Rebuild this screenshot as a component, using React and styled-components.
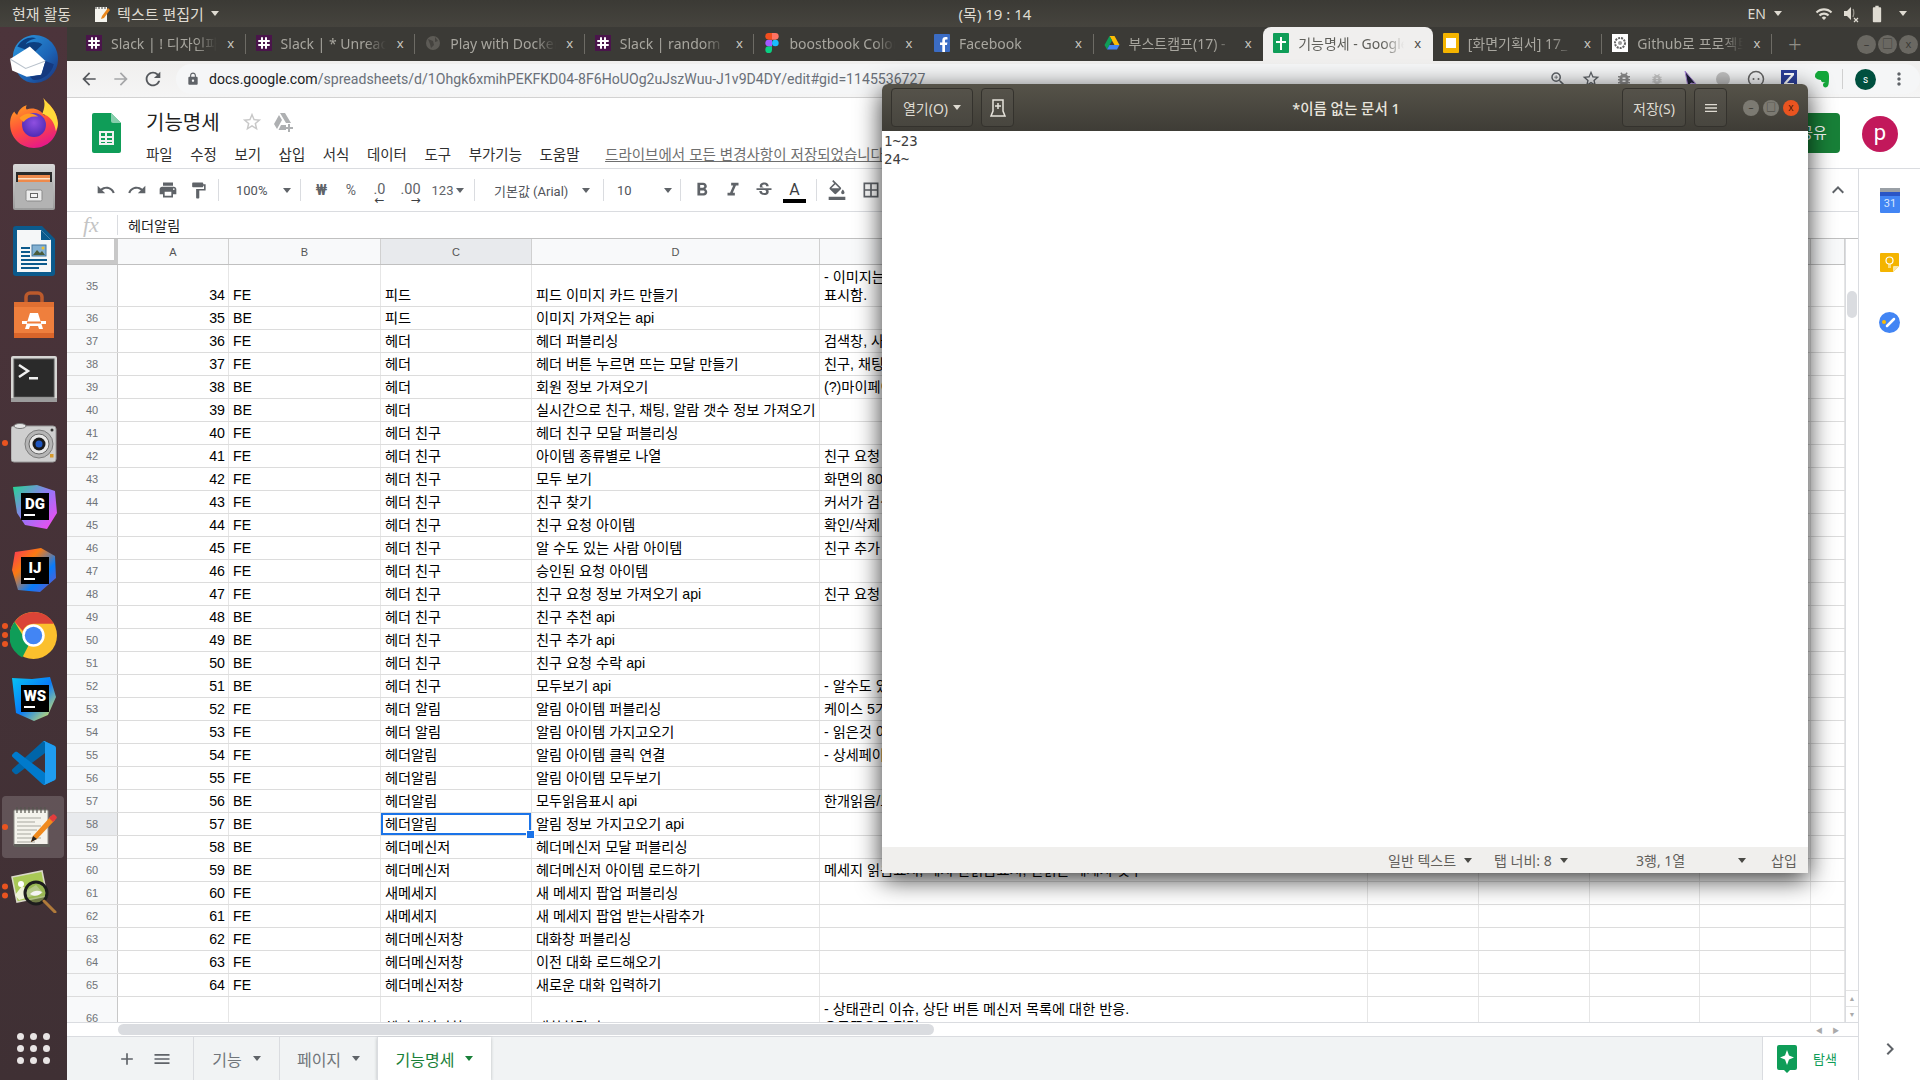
import React from 'react';
import styled, { createGlobalStyle } from 'styled-components';
import {
  MdArrowBack,
  MdArrowForward,
  MdRefresh,
  MdLock,
  MdUndo,
  MdRedo,
  MdPrint,
  MdFormatPaint,
  MdFormatBold,
  MdFormatItalic,
  MdStrikethroughS,
  MdFormatColorFill,
  MdBorderAll,
  MdKeyboardArrowUp,
  MdKeyboardArrowRight,
  MdStarBorder,
  MdAdd,
  MdMenu,
  MdWifi,
  MdBatteryStd,
  MdZoomIn,
  MdBugReport,
  MdMoreVert,
} from 'react-icons/md';

const SHEET_FONT = '"Liberation Sans", "Noto Sans CJK KR", sans-serif';
const UI_FONT = '"Noto Sans", "Noto Sans CJK KR", sans-serif';

const GlobalStyle = createGlobalStyle`
  html, body {
    margin: 0;
    padding: 0;
    width: 1920px;
    height: 1080px;
    overflow: hidden;
    background: #3c3b37;
  }
  * { box-sizing: border-box; }
`;

const Screen = styled.div`
  position: relative;
  width: 1920px;
  height: 1080px;
  display: flex;
  flex-direction: column;
  overflow: hidden;
  font-family: ${UI_FONT};
`;

/* gnome top bar */
const TopBar = styled.header`
  height: 27px;
  flex: none;
  display: grid;
  grid-template-columns: 1fr auto 1fr;
  align-items: center;
  background: linear-gradient(#3b3a35, #46443e);
  color: #dfdbd2;
  font-size: 15px;
`;

const TopLeft = styled.div`
  display: flex;
  align-items: center;
  padding-left: 12px;
`;

const AppName = styled.span`
  display: flex;
  align-items: center;
  gap: 7px;
  margin-left: 24px;
`;

const TopRight = styled.div`
  display: flex;
  align-items: center;
  justify-content: flex-end;
  padding-right: 13px;
  font-size: 14px;
`;

const TrayIcon = styled.span`
  display: flex;
  margin-left: ${({ $ml = 0 }) => $ml}px;
  svg { display: block; }
`;

const Caret = styled.span`
  display: inline-block;
  width: 0;
  height: 0;
  margin-left: ${({ $ml = 0 }) => $ml}px;
  border-left: ${({ $s = 4 }) => $s}px solid transparent;
  border-right: ${({ $s = 4 }) => $s}px solid transparent;
  border-top: ${({ $s = 4 }) => $s + 1}px solid ${({ $c = '#5f6368' }) => $c};
  flex: none;
`;

const Clock = styled.span`
  font-size: 15px;
  padding-left: 70px;
`;

const Desktop = styled.div`
  flex: 1;
  display: flex;
  min-height: 0;
`;

/* dock */
const Dock = styled.nav`
  width: 67px;
  flex: none;
  display: flex;
  flex-direction: column;
  align-items: center;
  background: linear-gradient(#4c343b, #3f3034);
`;

const DockItem = styled.div`
  height: 64px;
  width: 100%;
  flex: none;
  display: flex;
  align-items: center;
  justify-content: center;
  position: relative;
  &::before {
    content: '';
    display: ${({ $active }) => ($active ? 'block' : 'none')};
    position: absolute;
    left: 2px;
    right: 3px;
    top: 1px;
    bottom: 1px;
    border-radius: 4px;
    background: rgba(255, 255, 255, 0.17);
  }
  svg { display: block; position: relative; }
`;

const RunDots = styled.div`
  position: absolute;
  left: 2px;
  top: 50%;
  transform: translateY(-50%);
  display: flex;
  flex-direction: column;
  gap: 3px;
`;

const RunDot = styled.span`
  width: 6px;
  height: 6px;
  border-radius: 50%;
  background: #e95420;
`;

const LauncherGrid = styled.div`
  margin-top: auto;
  margin-bottom: 16px;
  display: grid;
  grid-template-columns: repeat(3, 7px);
  gap: 5px 6px;
`;

const LauncherDot = styled.span`
  width: 7px;
  height: 7px;
  border-radius: 50%;
  background: #e8e4e4;
`;

/* chrome */
const Browser = styled.main`
  flex: 1;
  min-width: 0;
  display: flex;
  flex-direction: column;
  background: #fff;
`;

const TabStrip = styled.div`
  height: 34px;
  flex: none;
  display: flex;
  align-items: flex-end;
  padding-left: 9px;
  background: #3b3a36;
`;

const Tab = styled.div`
  width: 169.6px;
  height: 34px;
  flex: none;
  display: flex;
  align-items: center;
  padding: 0 10px 2px 10px;
  gap: 9px;
  font-size: 14px;
  color: ${({ $active }) => ($active ? '#5f5f5a' : '#a8a69f')};
  background: ${({ $active }) => ($active ? '#f0efee' : 'transparent')};
  border-radius: 8px 8px 0 0;
  position: relative;
  &::after {
    content: '';
    display: ${({ $sep }) => ($sep ? 'block' : 'none')};
    position: absolute;
    right: 0;
    top: 7px;
    bottom: 7px;
    width: 1px;
    background: #6d6b65;
  }
  svg { flex: none; display: block; }
`;

const TabTitle = styled.span`
  flex: 1;
  min-width: 0;
  overflow: hidden;
  white-space: nowrap;
  mask-image: linear-gradient(to right, #000 80%, transparent 100%);
`;

const TabClose = styled.span`
  flex: none;
  width: 10px;
  font-size: 13px;
  text-align: center;
  color: ${({ $active }) => ($active ? '#4a4a46' : '#c9c7c0')};
`;

const NewTab = styled.span`
  margin-left: 16px;
  align-self: center;
  font-size: 24px;
  line-height: 1;
  font-weight: 300;
  color: #8f8d86;
`;

const WinButtons = styled.div`
  margin-left: auto;
  align-self: center;
  display: flex;
  gap: 2px;
  padding-right: 2px;
`;

const GhostWinButton = styled.span`
  width: 19px;
  height: 19px;
  border-radius: 50%;
  background: #6a6862;
  color: #3b3a36;
  font-size: 11px;
  line-height: 18px;
  text-align: center;
`;

const AddressBar = styled.div`
  height: 37px;
  flex: none;
  display: flex;
  align-items: center;
  background: linear-gradient(#f0efee, #f5f5f5);
  border-bottom: 1px solid #d2d2d2;
  padding-left: 6px;
  svg { display: block; flex: none; }
`;

const NavButton = styled.span`
  width: 32px;
  display: flex;
  justify-content: center;
  color: ${({ $off }) => ($off ? '#a5a6a8' : '#55585c')};
`;

const UrlPill = styled.div`
  flex: 1;
  height: 30px;
  margin-left: 7px;
  border-radius: 15px;
  background: #f5f6f7;
  display: flex;
  align-items: center;
  padding-left: 10px;
  gap: 9px;
  font-family: "Roboto", sans-serif;
  font-size: 14.1px;
  color: #6a7079;
  white-space: nowrap;
`;

const UrlHost = styled.span`
  color: #202124;
`;

const ExtIcons = styled.div`
  margin-left: auto;
  display: flex;
  align-items: center;
  height: 100%;
  padding-right: 11px;
`;

const ExtIcon = styled.span`
  width: ${({ $w = 33 }) => $w}px;
  display: flex;
  justify-content: center;
  color: ${({ $c = '#5f6368' }) => $c};
`;

const ExtSep = styled.span`
  width: 1px;
  height: 20px;
  background: #d0d0d0;
  margin: 0 4px;
`;

const ProfileDot = styled.span`
  width: 21px;
  height: 21px;
  margin: 0 13px 0 8px;
  border-radius: 50%;
  background: #00503f;
  color: #fff;
  font-size: 10px;
  line-height: 21px;
  text-align: center;
`;

/* google sheets */
const SheetHeader = styled.div`
  height: 71px;
  flex: none;
  display: flex;
  align-items: center;
  padding: 0 22px 0 25px;
  border-bottom: 1px solid #dadce0;
  font-family: ${SHEET_FONT};
`;

const DocMeta = styled.div`
  margin-left: 25px;
  display: flex;
  flex-direction: column;
  gap: 7px;
  padding-top: 5px;
`;

const DocTitleRow = styled.div`
  display: flex;
  align-items: center;
  gap: 11px;
  height: 28px;
  color: #c8c8c8;
`;

const DocTitle = styled.span`
  font-size: 20px;
  color: #1f1f1f;
  margin-right: 10px;
`;

const MenuRow = styled.div`
  display: flex;
  align-items: center;
  gap: 17.5px;
  font-size: 14.5px;
  color: #303030;
  white-space: nowrap;
`;

const SaveNote = styled.span`
  color: #6f6f6f;
  text-decoration: underline;
  margin-left: 8px;
`;

const ShareButton = styled.span`
  margin-left: auto;
  width: 80px;
  height: 40px;
  padding-left: 26px;
  border-radius: 4px;
  background: #188038;
  color: #fff;
  font-size: 15px;
  line-height: 40px;
  text-align: center;
`;

const Avatar = styled.span`
  width: 36px;
  height: 36px;
  margin: 1px 0 0 22px;
  border-radius: 50%;
  background: #c2185b;
  color: #fff;
  font-family: "Roboto", sans-serif;
  font-size: 22px;
  line-height: 33px;
  text-align: center;
`;

const SheetArea = styled.div`
  flex: 1;
  min-height: 0;
  display: flex;
`;

const SheetMain = styled.div`
  flex: 1;
  min-width: 0;
  display: flex;
  flex-direction: column;
  font-family: ${SHEET_FONT};
`;

const Toolbar = styled.div`
  height: 43px;
  flex: none;
  display: flex;
  align-items: center;
  padding-left: 23px;
  border-bottom: 1px solid #dadce0;
  font-family: "Roboto", "Noto Sans CJK KR", sans-serif;
  font-size: 13px;
  color: #51545a;
`;

const ToolButton = styled.span`
  width: ${({ $w = 31 }) => $w}px;
  height: 30px;
  flex: none;
  display: flex;
  align-items: center;
  justify-content: center;
  gap: 3px;
  margin-left: ${({ $ml = 0 }) => $ml}px;
  font-weight: ${({ $bold }) => ($bold ? 700 : 400)};
  font-size: ${({ $fs = 13 }) => $fs}px;
  color: ${({ $c = '#5f6368' }) => $c};
  svg { display: block; }
`;

const ToolSep = styled.span`
  width: 1px;
  height: 22px;
  flex: none;
  background: #dadce0;
  margin: 0 ${({ $m = 5 }) => $m}px;
`;

const ToolSelect = styled.span`
  width: ${({ $w }) => $w}px;
  flex: none;
  display: flex;
  align-items: center;
  justify-content: space-between;
  padding: 0 ${({ $pr = 8 }) => $pr}px 0 ${({ $pl = 13 }) => $pl}px;
  color: #51545a;
  white-space: nowrap;
`;

const DecimalGlyph = styled.span`
  display: flex;
  flex-direction: column;
  align-items: ${({ $end }) => ($end ? 'flex-end' : 'center')};
  line-height: 15px;
  font-size: 14.5px;
  padding-top: 5px;
`;

const DecimalArrow = styled.span`
  font-size: 12px;
  line-height: 6px;
  color: #3c4043;
  font-family: "DejaVu Sans", sans-serif;
`;

const ColorA = styled.span`
  display: flex;
  flex-direction: column;
  align-items: center;
  font-size: 16px;
  line-height: 19px;
  color: #3c4043;
  padding-top: 2px;
`;

const ColorBar = styled.span`
  width: 23px;
  height: 4px;
  background: #000;
`;

const CollapseButton = styled.span`
  margin-left: auto;
  margin-right: 5px;
  width: 30px;
  display: flex;
  justify-content: center;
  color: #5f6368;
`;

const FormulaBar = styled.div`
  height: 27px;
  flex: none;
  display: flex;
  align-items: center;
  padding-bottom: 1px;
  border-bottom: 1px solid #c0c0c0;
  font-size: 14.2px;
  color: #1f1f1f;
`;

const FxMark = styled.span`
  width: 50px;
  padding-left: 16px;
  font-family: "Liberation Serif", serif;
  font-style: italic;
  font-size: 22px;
  color: #c4c4c4;
`;

const FormulaSep = styled.span`
  width: 1px;
  height: 20px;
  background: #dadce0;
  margin-right: 10px;
`;

const GridFrame = styled.div`
  flex: 1;
  min-height: 0;
  display: flex;
`;

const GridClip = styled.div`
  flex: 1;
  min-width: 0;
  overflow: hidden;
`;

const columns = '51px 111px 152px 151px 288px 548px 111px 111px 110px 111px 34px';

const HeadRow = styled.div`
  display: grid;
  grid-template-columns: ${columns};
  height: 26px;
  border-bottom: 1px solid #c0c0c0;
  background: #f8f9fa;
`;

const CornerCell = styled.div`
  background: #fff;
  border-right: 4px solid #c8c8c8;
  box-shadow: inset 0 -4px 0 #c8c8c8;
`;

const HeadCell = styled.div`
  display: flex;
  align-items: center;
  justify-content: center;
  font-size: 11px;
  color: #555;
  border-right: 1px solid #d0d0d0;
  background: ${({ $on }) => ($on ? '#e8eaed' : 'transparent')};
`;

const Row = styled.div`
  display: grid;
  grid-template-columns: ${columns};
  height: ${({ $tall }) => ($tall ? 42 : 23)}px;
  border-bottom: 1px solid #dcdcdc;
`;

const RowNumber = styled.div`
  display: flex;
  align-items: center;
  justify-content: center;
  font-size: 11px;
  color: #6f7378;
  border-right: 1px solid #c8c8c8;
  background: ${({ $on }) => ($on ? '#e8eaed' : '#f8f9fa')};
`;

const Cell = styled.div`
  position: relative;
  display: flex;
  align-items: flex-end;
  justify-content: ${({ $num }) => ($num ? 'flex-end' : 'flex-start')};
  padding: 0 3px 2px 4px;
  font-size: 14.2px;
  line-height: 18px;
  color: #000;
  border-right: 1px solid #e6e6e6;
  white-space: pre;
  overflow: ${({ $on }) => ($on ? 'visible' : 'hidden')};
  ${({ $on }) =>
    $on &&
    `
    box-shadow: inset 0 0 0 2px #1a73e8;
    &::after {
      content: '';
      position: absolute;
      right: -4px;
      bottom: -4px;
      width: 7px;
      height: 7px;
      background: #1a73e8;
      border: 1px solid #fff;
      z-index: 2;
    }
  `}
`;

const VScroll = styled.div`
  width: 13px;
  flex: none;
  display: flex;
  flex-direction: column;
  border-left: 1px solid #dadce0;
`;

const VThumb = styled.div`
  width: 10px;
  height: 27px;
  margin: 52px 0 0 1px;
  border-radius: 5px;
  background: #dadce0;
`;

const ScrollStep = styled.div`
  height: 16px;
  display: flex;
  align-items: center;
  justify-content: center;
  border-top: 1px solid #e3e3e3;
  color: #aaa;
  font-size: 7px;
  margin-top: ${({ $push }) => ($push ? 'auto' : 0)};
`;

const HScroll = styled.div`
  height: 14px;
  flex: none;
  display: flex;
  align-items: center;
  padding-left: 51px;
  background: #fff;
  border-top: 1px solid #dadce0;
`;

const HThumb = styled.div`
  width: 816px;
  height: 11px;
  border-radius: 6px;
  background: #dadce0;
`;

const HSteps = styled.div`
  margin-left: auto;
  width: 47px;
  display: flex;
  justify-content: space-around;
  padding-right: 14px;
  color: #aaa;
  font-size: 7px;
`;

const SheetTabsBar = styled.div`
  height: 44px;
  flex: none;
  display: flex;
  align-items: stretch;
  padding-left: 40px;
  background: #f1f3f4;
  border-top: 1px solid #dadce0;
  font-family: "Liberation Sans", "Noto Sans CJK KR", sans-serif;
  font-size: 16px;
  color: #70757a;
`;

const TabsTool = styled.span`
  width: ${({ $w }) => $w}px;
  margin-right: ${({ $mr = 0 }) => $mr}px;
  display: flex;
  align-items: center;
  justify-content: center;
  color: #5f6368;
`;

const SheetTab = styled.span`
  width: ${({ $w }) => $w}px;
  display: flex;
  align-items: center;
  justify-content: center;
  gap: 11px;
  border-left: 1px solid #dadce0;
  color: ${({ $active }) => ($active ? '#188038' : '#70757a')};
  background: ${({ $active }) => ($active ? '#fff' : 'transparent')};
  box-shadow: ${({ $active }) => ($active ? '0 1px 3px rgba(60,64,67,.3)' : 'none')};
`;

const ExploreButton = styled.span`
  margin-left: auto;
  width: 96px;
  display: flex;
  align-items: center;
  gap: 16px;
  padding-left: 14px;
  background: #fff;
  border-left: 1px solid #dadce0;
  color: #0f9d58;
  font-size: 13px;
`;

const SidePanel = styled.aside`
  width: 62px;
  flex: none;
  display: flex;
  flex-direction: column;
  align-items: center;
  padding-top: 19px;
  gap: 40px;
  border-left: 1px solid #dadce0;
  background: #fff;
  svg { display: block; }
`;

const PanelArrow = styled.span`
  margin-top: auto;
  margin-bottom: 19px;
  color: #5f6368;
`;

/* gedit window */
const EditorWindow = styled.section`
  position: absolute;
  left: 882px;
  top: 84px;
  width: 926px;
  height: 789px;
  display: flex;
  flex-direction: column;
  border-radius: 6px 6px 0 0;
  background: #fff;
  box-shadow: 0 6px 26px rgba(0, 0, 0, 0.8);
  z-index: 5;
`;

const EditorHeader = styled.div`
  height: 47px;
  flex: none;
  display: flex;
  align-items: center;
  position: relative;
  padding: 0 9px;
  border-radius: 6px 6px 0 0;
  background: linear-gradient(#565349, #3e3c36);
  color: #dfdbd2;
  font-size: 14px;
`;

const EditorButton = styled.span`
  height: 39px;
  width: ${({ $w }) => $w}px;
  flex: none;
  display: flex;
  align-items: center;
  justify-content: center;
  gap: 5px;
  margin-left: ${({ $ml = 0 }) => $ml}px;
  border: 1px solid #34322d;
  border-radius: 4px;
  background: linear-gradient(#55524a, #48463f);
  color: #dfdbd2;
  svg { display: block; }
`;

const EditorTitle = styled.span`
  position: absolute;
  left: 0;
  right: 0;
  text-align: center;
  padding-left: 2px;
  font-size: 14.5px;
  font-weight: 500;
  color: #e8e5dd;
  pointer-events: none;
`;

const WindowControls = styled.div`
  margin-left: 16px;
  display: flex;
  gap: 4px;
`;

const WindowControl = styled.span`
  width: 16px;
  height: 16px;
  border-radius: 50%;
  font-size: 10px;
  line-height: 15px;
  text-align: center;
  color: ${({ $close }) => ($close ? '#4a1a08' : '#3f3d37')};
  background: ${({ $close }) => ($close ? '#e95420' : '#7c7a72')};
`;

const EditorBody = styled.pre`
  flex: 1;
  margin: 0;
  padding: 1px 2px;
  font-family: "DejaVu Sans Mono", "Noto Sans CJK KR", monospace;
  font-size: 14px;
  line-height: 18px;
  color: #3d3d3d;
`;

const EditorStatus = styled.div`
  height: 26px;
  flex: none;
  display: flex;
  align-items: center;
  padding-left: 506px;
  background: #f0efed;
  font-size: 14px;
  color: #62605b;
  white-space: nowrap;
`;

const StatusItem = styled.span`
  display: flex;
  align-items: center;
  justify-content: ${({ $spread }) => ($spread ? 'space-between' : 'flex-start')};
  gap: 8px;
  width: ${({ $w }) => $w}px;
  padding-right: ${({ $spread }) => ($spread ? 25 : 0)}px;
  flex: none;
`;

/* icons */
const SlackIcon = () => (
  <svg width="16" height="16" viewBox="0 0 16 16">
    <rect width="16" height="16" fill="#4a154b" />
    <g stroke="#fff" strokeWidth="2" strokeLinecap="round">
      <path d="M6 3v10M10 3v10M3 6h10M3 10h10" />
    </g>
  </svg>
);

const GlobeIcon = () => (
  <svg width="16" height="16" viewBox="0 0 16 16">
    <circle cx="8" cy="8" r="7" fill="#5d5b56" />
    <path d="M3 4l5 2 1 4-3 3-1-4zM10 2l3 4-3 1z" fill="#45433f" />
  </svg>
);

const FigmaIcon = () => (
  <svg width="16" height="20" viewBox="0 0 12 18">
    <circle cx="9" cy="9" r="3" fill="#1abcfe" />
    <path d="M3 18a3 3 0 0 0 3-3v-3H3a3 3 0 0 0 0 6z" fill="#0acf83" />
    <path d="M0 9a3 3 0 0 1 3-3h3v6H3a3 3 0 0 1-3-3z" fill="#a259ff" />
    <path d="M0 3a3 3 0 0 1 3-3h3v6H3a3 3 0 0 1-3-3z" fill="#f24e1e" />
    <path d="M6 0h3a3 3 0 0 1 0 6H6z" fill="#ff7262" />
  </svg>
);

const FacebookIcon = () => (
  <svg width="16" height="18" viewBox="0 0 16 18">
    <rect width="16" height="18" rx="1" fill="#3b6cc4" />
    <path d="M11 18v-7h2l.4-2.6H11V6.8c0-.8.3-1.3 1.4-1.3h1.1V3.2C13 3.100 12.300 3 11.500 3 9.500 3 8.300 4.200 8.300 6.300v2.100H6V11h2.300v7z" fill="#fff" />
  </svg>
);

const DriveIcon = () => (
  <svg width="16" height="16" viewBox="0 0 16 16">
    <path d="M5.500 1h5l5 9h-5z" fill="#fbbc04" />
    <path d="M5.500 1L0.500 10l2.500 4.500 5-9z" fill="#0f9d58" />
    <path d="M3 14.500h10l2.500-4.500h-10z" fill="#4285f4" />
  </svg>
);

const SheetsTabIcon = () => (
  <svg width="16" height="20" viewBox="0 0 16 20">
    <rect width="16" height="20" rx="1" fill="#0f9d58" />
    <path d="M7 4h2v4h4v2H9v7H7v-7H3V8h4z" fill="#fff" />
  </svg>
);

const SlidesIcon = () => (
  <svg width="16" height="20" viewBox="0 0 16 20">
    <rect width="16" height="20" rx="1" fill="#f4b400" />
    <rect x="3" y="5" width="10" height="10" fill="#fff" />
  </svg>
);

const GithubIcon = () => (
  <svg width="16" height="18" viewBox="0 0 16 18">
    <rect width="16" height="18" fill="#fff" />
    <circle cx="8" cy="9" r="5" fill="none" stroke="#666" strokeWidth="2" strokeDasharray="2 1" />
    <circle cx="8" cy="9" r="2" fill="#999" />
  </svg>
);

const ThunderbirdIcon = () => (
  <svg width="50" height="50" viewBox="0 0 48 48">
    <defs>
      <linearGradient id="tb" x1="0" y1="0" x2="1" y2="1">
        <stop offset="0" stopColor="#2d9be0" />
        <stop offset="0.6" stopColor="#1c63b5" />
        <stop offset="1" stopColor="#1b2f75" />
      </linearGradient>
    </defs>
    <path d="M4 26C2 14 10 2 24 1c14 0 23 11 23 23 0 13-10 23-23 23C14 47 7 40 4 26z" fill="url(#tb)" />
    <path d="M8 12c4-7 12-10 18-8-4 1-9 3-10 6 4-3 12-3 16 0l-8 8z" fill="#0d3f80" />
    <path d="M1 24l19-12 15 14-4 13-14 2-14-6z" fill="#fff" />
    <path d="M1 24l15 9 19-7" fill="none" stroke="#b9c2cc" strokeWidth="1" />
    <path d="M20 41l11-2 4-13 8 3c-2 9-11 16-20 15z" fill="#15397f" />
  </svg>
);

const FirefoxIcon = () => (
  <svg width="50" height="52" viewBox="0 0 48 50">
    <defs>
      <linearGradient id="ff" x1="0.2" y1="0" x2="0.6" y2="1">
        <stop offset="0" stopColor="#ffb01f" />
        <stop offset="0.55" stopColor="#ff4f3a" />
        <stop offset="1" stopColor="#e5178a" />
      </linearGradient>
      <radialGradient id="ffc" cx="0.5" cy="0.4" r="0.6">
        <stop offset="0" stopColor="#8f4fe0" />
        <stop offset="1" stopColor="#4e2bb5" />
      </radialGradient>
    </defs>
    <path d="M33 1c3 5 13 10 14 24 0 14-10 24-23 24S1 39 1 26c0-6 2-10 4-12 1 2 2 3 3 3 1-4 5-8 9-9-1 2-1 3 0 4 5-2 13-1 17 6 2-6 1-12-1-17z" fill="url(#ff)" />
    <path d="M33 1c3 5 13 10 14 24 0 3-1 6-2 8-1-9-6-15-13-17 2-5 3-10 1-15z" fill="#ffd93a" />
    <circle cx="24" cy="27" r="11.500" fill="url(#ffc)" />
    <path d="M10 20c6-6 14-5 18-1-6-1-11 1-14 5-1-1-3-2-4-4z" fill="#ff9a24" />
  </svg>
);

const FilesIcon = () => (
  <svg width="42" height="46" viewBox="0 0 42 46">
    <defs>
      <linearGradient id="cab" x1="0" y1="0" x2="0" y2="1">
        <stop offset="0" stopColor="#d8d8d8" />
        <stop offset="1" stopColor="#9a9a9a" />
      </linearGradient>
    </defs>
    <rect x="0" y="0" width="42" height="46" rx="2" fill="url(#cab)" />
    <rect x="3" y="8" width="36" height="12" fill="#2a2a2a" />
    <rect x="5" y="11" width="32" height="8" fill="#ee8a4c" />
    <rect x="5" y="14" width="32" height="1.500" fill="#ffe2c7" />
    <rect x="2" y="18" width="38" height="26" fill="#b3b3b3" />
    <rect x="13" y="26" width="16" height="11" rx="1.500" fill="#ececec" stroke="#8a8a8a" />
    <rect x="17" y="29" width="8" height="5" fill="#666" />
    <rect x="18" y="30" width="6" height="3" fill="#f4f4f4" />
  </svg>
);

const WriterIcon = () => (
  <svg width="42" height="50" viewBox="0 0 42 50">
    <path d="M3 0h26l13 13v34a3 3 0 0 1-3 3H3a3 3 0 0 1-3-3V3a3 3 0 0 1 3-3z" fill="#0b5a8c" />
    <path d="M4 4h24l10 10v32H4z" fill="#f5f7f8" />
    <path d="M28 4l10 10H28z" fill="#0b5a8c" />
    <g fill="#0b5a8c">
      <rect x="8" y="21" width="9" height="2" />
      <rect x="8" y="25" width="9" height="2" />
      <rect x="8" y="29" width="9" height="2" />
      <rect x="8" y="33" width="26" height="2" />
      <rect x="8" y="37" width="26" height="2" />
      <rect x="8" y="41" width="18" height="2" />
    </g>
    <rect x="19" y="19" width="14" height="11" fill="#83b1d2" stroke="#43779d" />
    <path d="M20 29l4-5 3 3 2-2 3 4z" fill="#4a5b3a" />
    <circle cx="30" cy="22" r="1.500" fill="#f0c02d" />
  </svg>
);

const BagIcon = () => (
  <svg width="44" height="48" viewBox="0 0 44 48">
    <path d="M14 12V6a4 4 0 0 1 4-4h8a4 4 0 0 1 4 4v6" fill="none" stroke="#bb5a2c" strokeWidth="3.500" />
    <path d="M2 11h40v36H2z" fill="#ef7f3d" />
    <path d="M2 42h40v5H2z" fill="#d9652a" />
    <path d="M2 11h40v5H2z" fill="#df6f32" />
    <path d="M18 22h8l5 16h-4l-1-3h-8l-1 3h-4z" fill="#fff" />
    <rect x="10" y="30" width="24" height="3" fill="#fff" />
    <rect x="15" y="30.500" width="14" height="2" fill="#ef7f3d" />
  </svg>
);

const TerminalIcon = () => (
  <svg width="46" height="46" viewBox="0 0 46 46">
    <rect width="46" height="46" rx="2" fill="#d6d6d4" />
    <rect x="3" y="3" width="40" height="38" fill="#2a2a2a" stroke="#555" />
    <path d="M8 9l9 6-9 6" fill="none" stroke="#f1f1f1" strokeWidth="2.500" />
    <rect x="18" y="21" width="9" height="2.500" fill="#f1f1f1" />
    <rect y="42" width="46" height="4" fill="#9c9c9c" />
  </svg>
);

const CameraIcon = () => (
  <svg width="46" height="40" viewBox="0 0 46 40">
    <rect y="3" width="45" height="36" rx="3" fill="#cfcfcf" stroke="#9a9a9a" />
    <ellipse cx="9" cy="3" rx="6" ry="2.500" fill="#e4e4e4" stroke="#777" />
    <circle cx="28" cy="21" r="14" fill="#b5b5b5" stroke="#7d7d7d" />
    <circle cx="28" cy="21" r="10" fill="#e8e8e8" stroke="#666" />
    <circle cx="28" cy="21" r="6.500" fill="#1a1a1a" />
    <circle cx="28" cy="21" r="3.500" fill="#1d55c0" />
    <rect x="39" y="31" width="3.500" height="3.500" fill="#d79a2c" />
    <circle cx="41" cy="7" r="1.500" fill="#333" />
  </svg>
);

const IdeIcon = ({ label, shape, id, stops }) => (
  <svg width="46" height="46" viewBox="0 0 46 46">
    <defs>
      <linearGradient id={id} x1="0" y1="0" x2="1" y2="1">
        {stops.map((stop, index) => (
          <stop key={stop} offset={index / (stops.length - 1)} stopColor={stop} />
        ))}
      </linearGradient>
    </defs>
    <path d={shape} fill={`url(#${id})`} />
    <rect x="10" y="9" width="28" height="27" fill="#000" />
    <rect x="13" y="30" width="11" height="2" fill="#fff" />
    <text x="24" y="25" textAnchor="middle" fontFamily="Roboto, sans-serif" fontWeight="900" fontSize="15" fill="#fff">
      {label}
    </text>
  </svg>
);

const ChromeIcon = () => (
  <svg width="47" height="47" viewBox="0 0 46 46">
    <circle cx="23" cy="23" r="23" fill="#fbc02d" />
    <path d="M23 0a23 23 0 0 1 20 11.500H23a11.500 11.500 0 0 0-10.500 7L4.500 9.500A23 23 0 0 1 23 0z" fill="#db4437" />
    <path d="M4.500 9.500L12.500 23 18 33 12 44.500A23 23 0 0 1 4.500 9.500z" fill="#0f9d58" />
    <circle cx="23" cy="23" r="11" fill="#fff" />
    <circle cx="23" cy="23" r="8.500" fill="#4285f4" />
  </svg>
);

const VSCodeIcon = () => (
  <svg width="44" height="44" viewBox="0 0 100 100">
    <path d="M96.4614 10.7962L75.8569 0.875542C73.4719 -0.272773 70.6217 0.211611 68.75 2.08333L1.29858 63.5832C-0.515693 65.2373 -0.513607 68.0937 1.30308 69.7452L6.81272 74.754C8.29793 76.1042 10.5347 76.2036 12.1338 74.9905L93.3609 13.3699C96.086 11.3026 100 13.2462 100 16.6667V16.4275C100 14.0265 98.6246 11.8378 96.4614 10.7962Z" fill="#0065a9" />
    <path d="M96.4614 89.2038L75.8569 99.1245C73.4719 100.273 70.6217 99.7884 68.75 97.9167L1.29858 36.4169C-0.515693 34.7627 -0.513607 31.9063 1.30308 30.2548L6.81272 25.246C8.29793 23.8958 10.5347 23.7964 12.1338 25.0095L93.3609 86.6301C96.086 88.6974 100 86.7538 100 83.3334V83.5726C100 85.9735 98.6246 88.1622 96.4614 89.2038Z" fill="#007acc" />
    <path d="M75.8578 99.1263C73.4721 100.274 70.6219 99.7885 68.75 97.9166C71.0564 100.223 75 98.5895 75 95.3278V4.67213C75 1.41039 71.0564 -0.223106 68.75 2.08329C70.6219 0.211402 73.4721 -0.273666 75.8578 0.873633L96.4587 10.7807C98.6234 11.8217 100 14.0112 100 16.4132V83.5871C100 85.9891 98.6234 88.1786 96.4586 89.2196L75.8578 99.1263Z" fill="#1f9cf0" />
  </svg>
);

const EditorIcon = () => (
  <svg width="46" height="44" viewBox="0 0 46 44">
    <rect x="3" y="5" width="34" height="36" rx="1" fill="#f4f3ec" stroke="#8c8c86" />
    <rect x="3" y="39" width="36" height="3" fill="#5f5f5a" />
    <g stroke="#55554f" strokeWidth="1.200">
      <path d="M6 2v6M10 2v6M14 2v6M18 2v6M22 2v6M26 2v6M30 2v6M34 2v6" />
    </g>
    <g stroke="#a7a79f" strokeWidth="1">
      <path d="M6 13h24M6 17h18M6 21h24M6 25h20M6 29h14M6 33h24M6 37h18" />
    </g>
    <path d="M20 37l2-6 18-20 4 4-18 19z" fill="#f08a1d" />
    <path d="M38 13l3-3a2 2 0 0 1 3 0l1 1a2 2 0 0 1 0 3l-3 3z" fill="#e33d3d" />
    <path d="M20 37l2-6 4 3z" fill="#222" />
  </svg>
);

const ViewerIcon = () => (
  <svg width="46" height="44" viewBox="0 0 46 44">
    <path d="M1 8l30-6 5 25-30 6z" fill="#a9c956" stroke="#d9d9c8" strokeWidth="1.500" />
    <path d="M4 26l7-9 6 4 8-5 7 8-24 7z" fill="#eef2d8" />
    <circle cx="10" cy="15" r="3" fill="#fff" />
    <circle cx="25" cy="24" r="11" fill="#8eab52" fillOpacity=".6" stroke="#1d1d1d" strokeWidth="3" />
    <path d="M19 25c4-4 8-4 12-2-2 4-8 5-12 2z" fill="#f4f4f4" />
    <path d="M33 32l11 11" stroke="#b07a3a" strokeWidth="3" strokeLinecap="round" />
  </svg>
);

const EditorTopIcon = () => (
  <svg width="15" height="18" viewBox="0 0 15 18">
    <rect y="2" width="12" height="15" fill="#f5f4ee" />
    <path d="M1 1v3M4 1v3M7 1v3M10 1v3" stroke="#444" strokeWidth="1" />
    <path d="M6 14l1-3 6-8 2 2-6 8z" fill="#e9861b" />
  </svg>
);

const SpeakerMuteIcon = () => (
  <svg width="16" height="18" viewBox="0 0 16 18">
    <path d="M1 6h3l4-4v13l-4-4H1z" fill="#dfdbd2" />
    <path d="M10 4c1 2 1 5 0 8" fill="none" stroke="#9a978f" strokeWidth="1.200" />
    <path d="M11 13l4 4M15 13l-4 4" stroke="#dfdbd2" strokeWidth="1.200" />
  </svg>
);

const SheetsLogo = () => (
  <svg width="29" height="40" viewBox="0 0 29 40">
    <path d="M2 0h17l10 10v28a2 2 0 0 1-2 2H2a2 2 0 0 1-2-2V2a2 2 0 0 1 2-2z" fill="#0f9d58" />
    <path d="M19 0l10 10H21a2 2 0 0 1-2-2z" fill="#87ceac" />
    <path d="M7 18h15v14H7zm2 2v3h4v-3zm6 0v3h5v-3zm-6 5v2h4v-2zm6 0v2h5v-2zm-6 4v1h4v-1zm6 0v1h5v-1z" fill="#f1f1f1" />
  </svg>
);

const DriveAddIcon = () => (
  <svg width="20" height="20" viewBox="0 0 20 20">
    <path d="M6 1h5l6 10h-5zM5 3l3 5-5 9-3-5zM4.500 18l2.500-5h5v5z" fill="#aeb0b2" />
    <path d="M14 12h2v3h3v2h-3v3h-2v-3h-3v-2h3z" fill="#aeb0b2" />
  </svg>
);

const ExploreIcon = () => (
  <svg width="20" height="28" viewBox="0 0 20 28">
    <path d="M2 0h16a2 2 0 0 1 2 2v21a2 2 0 0 1-2 2h-5l-3 3-3-3H2a2 2 0 0 1-2-2V2a2 2 0 0 1 2-2z" fill="#0f9d58" />
    <path d="M10 5l2 5.500 5 2-5 2L10 20l-2-5.500-5-2 5-2z" fill="#fff" />
  </svg>
);

const CalendarIcon = () => (
  <svg width="20" height="25" viewBox="0 0 20 25">
    <rect width="20" height="25" rx="1" fill="#4285f4" />
    <rect width="20" height="6" fill="#9aa0a6" />
    <rect y="4" width="20" height="4" fill="#2a56c6" />
    <text x="10" y="19" textAnchor="middle" fontFamily="Roboto, sans-serif" fontSize="11" fill="#dbe7fd">31</text>
  </svg>
);

const KeepIcon = () => (
  <svg width="19" height="19" viewBox="0 0 19 19">
    <path d="M1 0h17a1 1 0 0 1 1 1v12l-6 6H1a1 1 0 0 1-1-1V1a1 1 0 0 1 1-1z" fill="#f4b400" />
    <path d="M13 19v-5a1 1 0 0 1 1-1h5z" fill="#fbe7a8" />
    <circle cx="9.500" cy="7.500" r="3.500" fill="none" stroke="#fff" strokeWidth="1.200" />
    <path d="M8 12h3M8 14h3" stroke="#fff" strokeWidth="1.200" />
  </svg>
);

const TasksIcon = () => (
  <svg width="21" height="21" viewBox="0 0 21 21">
    <circle cx="10.500" cy="10.500" r="10.500" fill="#4285f4" />
    <path d="M8 14l7-7" stroke="#fff" strokeWidth="2.500" strokeLinecap="round" />
    <circle cx="5" cy="10" r="2" fill="#fbbc04" />
  </svg>
);

const EvernoteIcon = () => (
  <svg width="16" height="18" viewBox="0 0 16 18">
    <path d="M4 1h7c3 0 4 2 4 5 0 4 0 8-1 10s-5 2-5-1 3-2 4-2c-3-1-6 0-6-3-2 0-5-1-6-3 0-2 0-3 1-4l2-2z" fill="#14a83b" />
  </svg>
);

const tabs = [
  { title: 'Slack | ! 디자인파트', icon: <SlackIcon />, sep: true },
  { title: 'Slack | * Unread', icon: <SlackIcon />, sep: true },
  { title: 'Play with Docker', icon: <GlobeIcon />, sep: true },
  { title: 'Slack | random | ', icon: <SlackIcon />, sep: true },
  { title: 'boostbook Color', icon: <FigmaIcon /> },
  { title: 'Facebook', icon: <FacebookIcon />, sep: true },
  { title: '부스트캠프(17) - ', icon: <DriveIcon /> },
  { title: '기능명세 - Google', icon: <SheetsTabIcon />, active: true },
  { title: '[화면기획서] 17_', icon: <SlidesIcon />, sep: true },
  { title: 'Github로 프로젝트', icon: <GithubIcon />, sep: true },
];

const dockItems = [
  { icon: <ThunderbirdIcon /> },
  { icon: <FirefoxIcon /> },
  { icon: <FilesIcon /> },
  { icon: <WriterIcon /> },
  { icon: <BagIcon /> },
  { icon: <TerminalIcon /> },
  { icon: <CameraIcon />, dots: 1 },
  {
    icon: (
      <IdeIcon
        label="DG"
        id="dg"
        stops={['#22d88f', '#9775f8', '#ff45ed']}
        shape="M2 3l24-2 18 6 2 22-10 16-22-4-8-12z"
      />
    ),
  },
  {
    icon: (
      <IdeIcon
        label="IJ"
        id="ij"
        stops={['#fe315d', '#f97a12', '#087cfa', '#7a4fbf']}
        shape="M4 4l14-2 12-2 14 8 1 22-16 14-22-2-6-20z"
      />
    ),
  },
  { icon: <ChromeIcon />, dots: 3 },
  {
    icon: (
      <IdeIcon
        label="WS"
        id="ws"
        stops={['#07c3f2', '#087cfa', '#fcf84a']}
        shape="M1 2l20 1 18-2 6 20-8 18-14 6-18-8z"
      />
    ),
  },
  { icon: <VSCodeIcon /> },
  { icon: <EditorIcon />, dots: 1, active: true },
  { icon: <ViewerIcon />, dots: 2 },
];

const rows = [
  [35, 'FE', '피드', '피드 이미지 카드 만들기', '- 이미지는 최대 4장까지\n표시함.'],
  [36, 'BE', '피드', '이미지 가져오는 api', ''],
  [37, 'FE', '헤더', '헤더 퍼블리싱', '검색창, 사용자 아이콘'],
  [38, 'FE', '헤더', '헤더 버튼 누르면 뜨는 모달 만들기', '친구, 채팅, 알림'],
  [39, 'BE', '헤더', '회원 정보 가져오기', '(?)마이페이지'],
  [40, 'BE', '헤더', '실시간으로 친구, 채팅, 알람 갯수 정보 가져오기', ''],
  [41, 'FE', '헤더 친구', '헤더 친구 모달 퍼블리싱', ''],
  [42, 'FE', '헤더 친구', '아이템 종류별로 나열', '친구 요청'],
  [43, 'FE', '헤더 친구', '모두 보기', '화면의 80%'],
  [44, 'FE', '헤더 친구', '친구 찾기', '커서가 검색창에'],
  [45, 'FE', '헤더 친구', '친구 요청 아이템', '확인/삭제'],
  [46, 'FE', '헤더 친구', '알 수도 있는 사람 아이템', '친구 추가'],
  [47, 'FE', '헤더 친구', '승인된 요청 아이템', ''],
  [48, 'FE', '헤더 친구', '친구 요청 정보 가져오기 api', '친구 요청'],
  [49, 'BE', '헤더 친구', '친구 추천 api', ''],
  [50, 'BE', '헤더 친구', '친구 추가 api', ''],
  [51, 'BE', '헤더 친구', '친구 요청 수락 api', ''],
  [52, 'BE', '헤더 친구', '모두보기 api', '- 알수도 있는'],
  [53, 'FE', '헤더 알림', '알림 아이템 퍼블리싱', '케이스 5가지'],
  [54, 'FE', '헤더 알림', '알림 아이템 가지고오기', '- 읽은것 어둡게'],
  [55, 'FE', '헤더알림', '알림 아이템 클릭 연결', '- 상세페이지'],
  [56, 'FE', '헤더알림', '알림 아이템 모두보기', ''],
  [57, 'BE', '헤더알림', '모두읽음표시 api', '한개읽음/모두읽음'],
  [58, 'BE', '헤더알림', '알림 정보 가지고오기 api', ''],
  [59, 'BE', '헤더메신저', '헤더메신저 모달 퍼블리싱', ''],
  [60, 'BE', '헤더메신저', '헤더메신저 아이템 로드하기', '메세지 읽음표시, 메시 안읽음표시, 안읽은 메세지 갯수'],
  [61, 'FE', '새메세지', '새 메세지 팝업 퍼블리싱', ''],
  [62, 'FE', '새메세지', '새 메세지 팝업 받는사람추가', ''],
  [63, 'FE', '헤더메신저창', '대화창 퍼블리싱', ''],
  [64, 'FE', '헤더메신저창', '이전 대화 로드해오기', ''],
  [65, 'FE', '헤더메신저창', '새로운 대화 입력하기', ''],
  [66, 'FE', '헤더메신저창', '대화창닫기', '- 상태관리 이슈, 상단 버튼 메신저 목록에 대한 반응.\n오른쪽으로 정렬'],
];

const TALL_ROWS = [35, 66];
const SELECTED_ROW = 58;
const EMPTY_COLUMNS = ['f', 'g', 'h', 'i', 'j'];
const HEAD_LABELS = ['A', 'B', 'C', 'D', 'E', 'F', 'G', 'H', 'I', ''];
const MENU_ITEMS = ['파일', '수정', '보기', '삽입', '서식', '데이터', '도구', '부가기능', '도움말'];

const SheetGrid = () => (
  <GridClip>
    <HeadRow>
      <CornerCell />
      {HEAD_LABELS.map((label) => (
        <HeadCell key={label} $on={label === 'C'}>
          {label}
        </HeadCell>
      ))}
    </HeadRow>
    {rows.map(([no, kind, area, task, note]) => (
      <Row key={no} $tall={TALL_ROWS.includes(no)}>
        <RowNumber $on={no === SELECTED_ROW}>{no}</RowNumber>
        <Cell $num>{no - 1}</Cell>
        <Cell>{kind}</Cell>
        <Cell $on={no === SELECTED_ROW}>{area}</Cell>
        <Cell>{task}</Cell>
        <Cell>{note}</Cell>
        {EMPTY_COLUMNS.map((col) => (
          <Cell key={col} />
        ))}
      </Row>
    ))}
  </GridClip>
);

const App = () => (
  <Screen>
    <GlobalStyle />
    <TopBar>
      <TopLeft>
        <span>현재 활동</span>
        <AppName>
          <EditorTopIcon />
          텍스트 편집기
          <Caret $c="#dfdbd2" />
        </AppName>
      </TopLeft>
      <Clock>(목) 19 : 14</Clock>
      <TopRight>
        <span>EN</span>
        <Caret $c="#dfdbd2" $ml={8} />
        <TrayIcon $ml={33}><MdWifi size={18} /></TrayIcon>
        <TrayIcon $ml={10}><SpeakerMuteIcon /></TrayIcon>
        <TrayIcon $ml={8}><MdBatteryStd size={20} /></TrayIcon>
        <Caret $c="#dfdbd2" $ml={12} />
      </TopRight>
    </TopBar>
    <Desktop>
      <Dock>
        {dockItems.map((item, index) => (
          <DockItem key={index} $active={item.active}>
            {item.dots && (
              <RunDots>
                {Array.from({ length: item.dots }, (_, dot) => (
                  <RunDot key={dot} />
                ))}
              </RunDots>
            )}
            {item.icon}
          </DockItem>
        ))}
        <LauncherGrid>
          {Array.from({ length: 9 }, (_, dot) => (
            <LauncherDot key={dot} />
          ))}
        </LauncherGrid>
      </Dock>
      <Browser>
        <TabStrip>
          {tabs.map((tab) => (
            <Tab key={tab.title} $active={tab.active} $sep={tab.sep}>
              {tab.icon}
              <TabTitle>{tab.title}</TabTitle>
              <TabClose $active={tab.active}>x</TabClose>
            </Tab>
          ))}
          <NewTab>+</NewTab>
          <WinButtons>
            <GhostWinButton>–</GhostWinButton>
            <GhostWinButton>□</GhostWinButton>
            <GhostWinButton>x</GhostWinButton>
          </WinButtons>
        </TabStrip>
        <AddressBar>
          <NavButton>
            <MdArrowBack size={20} />
          </NavButton>
          <NavButton $off>
            <MdArrowForward size={20} />
          </NavButton>
          <NavButton>
            <MdRefresh size={22} />
          </NavButton>
          <UrlPill>
            <MdLock size={14} color="#5f6368" />
            <span>
              <UrlHost>docs.google.com</UrlHost>
              /spreadsheets/d/1Ohgk6xmihPEKFKD04-8F6HoUOg2uJszWuu-J1v9D4DY/edit#gid=1145536727
            </span>
            <ExtIcons>
              <ExtIcon>
                <MdZoomIn size={18} />
              </ExtIcon>
              <ExtIcon>
                <MdStarBorder size={20} />
              </ExtIcon>
              <ExtIcon $c="#8b8b8b">
                <MdBugReport size={18} />
              </ExtIcon>
              <ExtIcon $c="#c9c9c9">
                <MdBugReport size={14} />
              </ExtIcon>
              <ExtIcon>
                <svg width="14" height="18" viewBox="0 0 14 18">
                  <path d="M2 1l11 13-5-1-3 4z" fill="#20203a" stroke="#b08ce0" strokeWidth="1" />
                </svg>
              </ExtIcon>
              <ExtIcon>
                <svg width="16" height="16" viewBox="0 0 16 16">
                  <circle cx="8" cy="8" r="7" fill="#c2c2c2" />
                </svg>
              </ExtIcon>
              <ExtIcon>
                <svg width="18" height="18" viewBox="0 0 18 18">
                  <circle cx="9" cy="9" r="7.500" fill="none" stroke="#666" strokeWidth="1.500" />
                  <circle cx="6.500" cy="9" r="1" fill="#666" />
                  <circle cx="11.500" cy="9" r="1" fill="#666" />
                </svg>
              </ExtIcon>
              <ExtIcon>
                <svg width="16" height="18" viewBox="0 0 16 18">
                  <rect width="16" height="18" fill="#2c3f9a" />
                  <path d="M3 3h10v2l-7 8h7v2H3v-2l7-8H3z" fill="#fff" />
                </svg>
              </ExtIcon>
              <ExtIcon>
                <EvernoteIcon />
              </ExtIcon>
              <ExtSep />
              <ProfileDot>s</ProfileDot>
              <ExtIcon $w={20}>
                <MdMoreVert size={20} />
              </ExtIcon>
            </ExtIcons>
          </UrlPill>
        </AddressBar>
        <SheetHeader>
          <SheetsLogo />
          <DocMeta>
            <DocTitleRow>
              <DocTitle>기능명세</DocTitle>
              <MdStarBorder size={22} />
              <DriveAddIcon />
            </DocTitleRow>
            <MenuRow>
              {MENU_ITEMS.map((item) => (
                <span key={item}>{item}</span>
              ))}
              <SaveNote>드라이브에서 모든 변경사항이 저장되었습니다.</SaveNote>
            </MenuRow>
          </DocMeta>
          <ShareButton>공유</ShareButton>
          <Avatar>p</Avatar>
        </SheetHeader>
        <SheetArea>
          <SheetMain>
            <Toolbar>
              <ToolButton><MdUndo size={20} /></ToolButton>
              <ToolButton><MdRedo size={20} /></ToolButton>
              <ToolButton><MdPrint size={20} /></ToolButton>
              <ToolButton><MdFormatPaint size={19} /></ToolButton>
              <ToolSep $m={4} />
              <ToolSelect $w={72} $pr={4}>100%<Caret /></ToolSelect>
              <ToolSep $m={5} />
              <ToolButton $bold $fs={14}>₩</ToolButton>
              <ToolButton $w={28} $fs={14}>%</ToolButton>
              <ToolButton $w={29}>
                <DecimalGlyph>.0<DecimalArrow>←</DecimalArrow></DecimalGlyph>
              </ToolButton>
              <ToolButton $w={33}>
                <DecimalGlyph $end>.00<DecimalArrow>→</DecimalArrow></DecimalGlyph>
              </ToolButton>
              <ToolButton $w={42}>123<Caret /></ToolButton>
              <ToolSep />
              <ToolSelect $w={118} $pl={14}>기본값 (Arial)<Caret /></ToolSelect>
              <ToolSep />
              <ToolSelect $w={66} $pl={8} $pr={3}>10<Caret /></ToolSelect>
              <ToolSep />
              <ToolButton><MdFormatBold size={22} /></ToolButton>
              <ToolButton><MdFormatItalic size={22} /></ToolButton>
              <ToolButton><MdStrikethroughS size={20} /></ToolButton>
              <ToolButton>
                <ColorA>A<ColorBar /></ColorA>
              </ToolButton>
              <ToolSep $m={6} />
              <ToolButton $w={28}><MdFormatColorFill size={20} /></ToolButton>
              <ToolButton $ml={4}><MdBorderAll size={20} /></ToolButton>
              <CollapseButton>
                <MdKeyboardArrowUp size={24} />
              </CollapseButton>
            </Toolbar>
            <FormulaBar>
              <FxMark>fx</FxMark>
              <FormulaSep />
              헤더알림
            </FormulaBar>
            <GridFrame>
              <SheetGrid />
              <VScroll>
                <VThumb />
                <ScrollStep $push>▲</ScrollStep>
                <ScrollStep>▼</ScrollStep>
              </VScroll>
            </GridFrame>
            <HScroll>
              <HThumb />
              <HSteps>
                <span>◀</span>
                <span>▶</span>
              </HSteps>
            </HScroll>
            <SheetTabsBar>
              <TabsTool $w={40}><MdAdd size={20} /></TabsTool>
              <TabsTool $w={30} $mr={16}><MdMenu size={20} /></TabsTool>
              <SheetTab $w={86}>기능<Caret /></SheetTab>
              <SheetTab $w={98}>페이지<Caret /></SheetTab>
              <SheetTab $w={114} $active>기능명세<Caret $c="#188038" /></SheetTab>
              <ExploreButton>
                <ExploreIcon />
                탐색
              </ExploreButton>
            </SheetTabsBar>
          </SheetMain>
          <SidePanel>
            <CalendarIcon />
            <KeepIcon />
            <TasksIcon />
            <PanelArrow>
              <MdKeyboardArrowRight size={24} />
            </PanelArrow>
          </SidePanel>
        </SheetArea>
      </Browser>
    </Desktop>
    <EditorWindow>
      <EditorHeader>
        <EditorButton $w={82}>
          열기(O)
          <Caret $c="#dfdbd2" />
        </EditorButton>
        <EditorButton $w={33} $ml={8}>
          <svg width="16" height="18" viewBox="0 0 16 18">
            <path d="M3 1h10v11l2 5H1l2-5z" fill="none" stroke="#e6e3db" strokeWidth="1.500" />
            <path d="M8 4v6M5 7h6" stroke="#e6e3db" strokeWidth="1.500" />
          </svg>
        </EditorButton>
        <EditorTitle>*이름 없는 문서 1</EditorTitle>
        <EditorButton $w={64} $ml={608}>저장(S)</EditorButton>
        <EditorButton $w={33} $ml={8}>
          <MdMenu size={16} />
        </EditorButton>
        <WindowControls>
          <WindowControl>–</WindowControl>
          <WindowControl>□</WindowControl>
          <WindowControl $close>x</WindowControl>
        </WindowControls>
      </EditorHeader>
      <EditorBody>{'1~23\n24~'}</EditorBody>
      <EditorStatus>
        <StatusItem $w={106}>일반 텍스트<Caret $c="#4a4a46" /></StatusItem>
        <StatusItem $w={142}>탭 너비: 8<Caret $c="#4a4a46" /></StatusItem>
        <StatusItem $w={135} $spread>3행, 1열<Caret $c="#4a4a46" /></StatusItem>
        <StatusItem $w={30}>삽입</StatusItem>
      </EditorStatus>
    </EditorWindow>
  </Screen>
);

export default App;
